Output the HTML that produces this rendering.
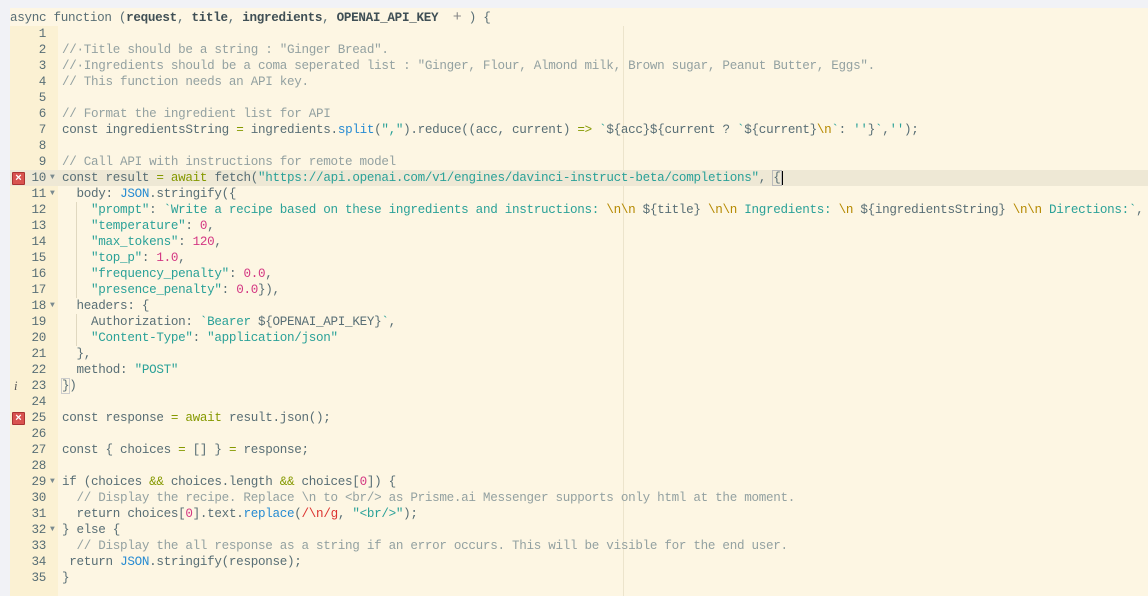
<!DOCTYPE html>
<html><head><meta charset="utf-8"><style>
html,body{margin:0;padding:0;width:1148px;height:596px;overflow:hidden;background:#f1f2f6;}
#ed{position:absolute;left:10px;top:8px;width:1138px;height:588px;background:#fdf6e3;font-family:"Liberation Mono",monospace;font-size:12.6px;letter-spacing:-0.3px;color:#586e75;}
#hdr{position:absolute;left:0;top:0;height:18px;line-height:20px;white-space:pre;width:100%;}
#hdr b{color:#3f4f55}
#gut{position:absolute;left:0;top:18px;width:48px;height:570px;background:#fbf1d3;}
.l{position:absolute;left:0;width:1138px;height:16px;line-height:16px;white-space:pre;}
.n{position:absolute;left:0;width:36px;text-align:right;color:#586e75}
.f{position:absolute;left:40px;font-size:8px;color:#7a8a8f}
.c{position:absolute;left:52px;}
.act{background:#eee8d5}
.cm{color:#93a1a1}.s{color:#2aa198}.k{color:#859900}.b{color:#268bd2}.num{color:#d33682}.e{color:#b58900}
.err{position:absolute;z-index:2;left:2px;top:2px;width:11px;height:11px;background:#d9534f;border:1px solid #a33;color:#fff;font-size:11px;line-height:11px;text-align:center;font-family:"Liberation Sans",sans-serif;font-weight:bold;border-radius:1px;letter-spacing:0}
.info{position:absolute;left:4px;color:#555;font-style:italic;font-family:"Liberation Serif",serif;}
#pm{position:absolute;left:613px;top:18px;width:1px;height:570px;background:#ece4cc;}
.g{position:absolute;width:1px;background:#e0d8c0;left:66px}
</style></head><body><div id="ed">
<div id="hdr">async function (<b>request</b>, <b>title</b>, <b>ingredients</b>, <b>OPENAI_API_KEY</b>  <span style="color:#888;font-size:15px">+</span> ) {</div>
<div id="gut"></div>
<div id="pm"></div>
<div class="l" style="top:18px"><span class="n">1</span></div>
<div class="l" style="top:34px"><span class="n">2</span><span class="c cm">//·Title should be a string : "Ginger Bread".</span></div>
<div class="l" style="top:50px"><span class="n">3</span><span class="c cm">//·Ingredients should be a coma seperated list : "Ginger, Flour, Almond milk, Brown sugar, Peanut Butter, Eggs".</span></div>
<div class="l" style="top:66px"><span class="n">4</span><span class="c cm">// This function needs an API key.</span></div>
<div class="l" style="top:82px"><span class="n">5</span></div>
<div class="l" style="top:98px"><span class="n">6</span><span class="c cm">// Format the ingredient list for API</span></div>
<div class="l" style="top:114px"><span class="n">7</span><span class="c">const ingredientsString <span class="k">=</span> ingredients.<span class="b">split</span>(<span class="s">","</span>).reduce((acc, current) <span class="k">=&gt;</span> <span class="s">`</span>${acc}${current ? <span class="s">`</span>${current}<span class="e">\n</span><span class="s">`</span>: <span class="s">''</span>}<span class="s">`</span>,<span class="s">''</span>);</span></div>
<div class="l" style="top:130px"><span class="n">8</span></div>
<div class="l" style="top:146px"><span class="n">9</span><span class="c cm">// Call API with instructions for remote model</span></div>
<div class="l act" style="top:162px"><span class="err">×</span><span class="n">10</span><span class="f">▼</span><span class="c">const result <span class="k">=</span> <span class="k">await</span> fetch(<span class="s">"https://api.openai.com/v1/engines/davinci-instruct-beta/completions"</span>, <span style="outline:1px solid #bbb">{</span><span style="border-left:2px solid #000"></span></span></div>
<div class="l" style="top:178px"><span class="n">11</span><span class="f">▼</span><span class="c">  body: <span class="b">JSON</span>.stringify({</span></div>
<div class="l" style="top:194px"><span class="n">12</span><span class="c">    <span class="s">"prompt"</span>: <span class="s">`Write a recipe based on these ingredients and instructions: </span><span class="e">\n\n</span> ${title} <span class="e">\n\n</span><span class="s"> Ingredients: </span><span class="e">\n</span> ${ingredientsString} <span class="e">\n\n</span><span class="s"> Directions:`</span>,</span></div>
<div class="l" style="top:210px"><span class="n">13</span><span class="c">    <span class="s">"temperature"</span>: <span class="num">0</span>,</span></div>
<div class="l" style="top:226px"><span class="n">14</span><span class="c">    <span class="s">"max_tokens"</span>: <span class="num">120</span>,</span></div>
<div class="l" style="top:242px"><span class="n">15</span><span class="c">    <span class="s">"top_p"</span>: <span class="num">1.0</span>,</span></div>
<div class="l" style="top:258px"><span class="n">16</span><span class="c">    <span class="s">"frequency_penalty"</span>: <span class="num">0.0</span>,</span></div>
<div class="l" style="top:274px"><span class="n">17</span><span class="c">    <span class="s">"presence_penalty"</span>: <span class="num">0.0</span>}),</span></div>
<div class="l" style="top:290px"><span class="n">18</span><span class="f">▼</span><span class="c">  headers: {</span></div>
<div class="l" style="top:306px"><span class="n">19</span><span class="c">    Authorization: <span class="s">`Bearer </span>${OPENAI_API_KEY}<span class="s">`</span>,</span></div>
<div class="l" style="top:322px"><span class="n">20</span><span class="c">    <span class="s">"Content-Type"</span>: <span class="s">"application/json"</span></span></div>
<div class="l" style="top:338px"><span class="n">21</span><span class="c">  },</span></div>
<div class="l" style="top:354px"><span class="n">22</span><span class="c">  method: <span class="s">"POST"</span></span></div>
<div class="l" style="top:370px"><span class="info">i</span><span class="n">23</span><span class="c"><span style="outline:1px solid #ccc">}</span>)</span></div>
<div class="l" style="top:386px"><span class="n">24</span></div>
<div class="l" style="top:402px"><span class="err">×</span><span class="n">25</span><span class="c">const response <span class="k">=</span> <span class="k">await</span> result.json();</span></div>
<div class="l" style="top:418px"><span class="n">26</span></div>
<div class="l" style="top:434px"><span class="n">27</span><span class="c">const { choices <span class="k">=</span> [] } <span class="k">=</span> response;</span></div>
<div class="l" style="top:450px"><span class="n">28</span></div>
<div class="l" style="top:466px"><span class="n">29</span><span class="f">▼</span><span class="c">if (choices <span class="k">&amp;&amp;</span> choices.length <span class="k">&amp;&amp;</span> choices[<span class="num">0</span>]) {</span></div>
<div class="l" style="top:482px"><span class="n">30</span><span class="c cm">  // Display the recipe. Replace \n to &lt;br/&gt; as Prisme.ai Messenger supports only html at the moment.</span></div>
<div class="l" style="top:498px"><span class="n">31</span><span class="c">  return choices[<span class="num">0</span>].text.<span class="b">replace</span>(<span style="color:#dc322f">/\n/g</span>, <span class="s">"&lt;br/&gt;"</span>);</span></div>
<div class="l" style="top:514px"><span class="n">32</span><span class="f">▼</span><span class="c">} else {</span></div>
<div class="l" style="top:530px"><span class="n">33</span><span class="c cm">  // Display the all response as a string if an error occurs. This will be visible for the end user.</span></div>
<div class="l" style="top:546px"><span class="n">34</span><span class="c"> return <span class="b">JSON</span>.stringify(response);</span></div>
<div class="l" style="top:562px"><span class="n">35</span><span class="c">}</span></div>
<div class="g" style="top:194px;height:96px"></div>
<div class="g" style="top:306px;height:32px"></div>
</div></body></html>
